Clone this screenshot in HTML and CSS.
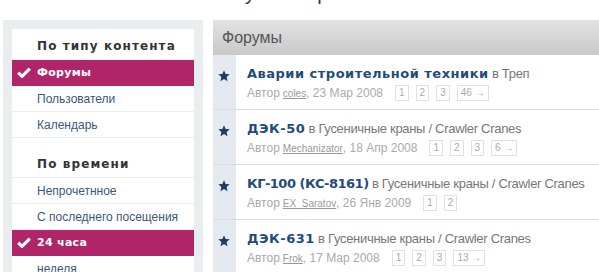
FILE: index.html
```html
<!DOCTYPE html>
<html lang="ru">
<head>
  <meta charset="UTF-8">
  <meta name="viewport" content="width=device-width, initial-scale=1.0">
  <title>Форумы</title>
  <link rel="stylesheet" href="styles.css">
</head>
<body>
  <div class="page-head">
    <h1 class="page-title">Активные темы за сутки и прочее</h1>
  </div>

  <div class="page">
    <div class="sidebar">
      <div class="sidebar-inner">
        <div class="filter-group">
          <div class="filter-title">По типу контента</div>
          <a class="filter-item active" href="#">
            <svg class="check" viewBox="0 0 14 11" width="14" height="11"><path d="M1.2 5.8 L5 9.3 L12.8 1.6" fill="none" stroke="#fff" stroke-width="3.2"/></svg>
            Форумы
          </a>
          <a class="filter-item" href="#">Пользователи</a>
          <a class="filter-item" href="#">Календарь</a>
        </div>

        <div class="filter-group">
          <div class="filter-title">По времени</div>
          <a class="filter-item" href="#">Непрочетнное</a>
          <a class="filter-item" href="#">С последнего посещения</a>
          <a class="filter-item active" href="#">
            <svg class="check" viewBox="0 0 14 11" width="14" height="11"><path d="M1.2 5.8 L5 9.3 L12.8 1.6" fill="none" stroke="#fff" stroke-width="3.2"/></svg>
            24 часа
          </a>
          <a class="filter-item" href="#">неделя</a>
        </div>
      </div>
    </div>

    <div class="main">
      <div class="main-header">Форумы</div>

      <div class="topic">
        <div class="topic-icon"><svg viewBox="0 0 12 12" width="12" height="12"><path d="M6 0.3 L7.6 4 L11.7 4.3 L8.6 7 L9.5 11.2 L6 9 L2.5 11.2 L3.4 7 L0.3 4.3 L4.4 4 Z" fill="#1e3d64"/></svg></div>
        <div class="topic-body">
          <div class="topic-line"><a class="topic-title" href="#">Аварии строительной техники</a> в Треп</div>
          <div class="topic-meta">
            Автор <a class="author" href="#">coles</a>, 23 Мар 2008
            <span class="pager"><a href="#">1</a><a href="#">2</a><a href="#">3</a><a href="#">46 &rarr;</a></span>
          </div>
        </div>
      </div>

      <div class="topic">
        <div class="topic-icon"><svg viewBox="0 0 12 12" width="12" height="12"><path d="M6 0.3 L7.6 4 L11.7 4.3 L8.6 7 L9.5 11.2 L6 9 L2.5 11.2 L3.4 7 L0.3 4.3 L4.4 4 Z" fill="#1e3d64"/></svg></div>
        <div class="topic-body">
          <div class="topic-line"><a class="topic-title" href="#">ДЭК-50</a> в Гусеничные краны / Crawler Cranes</div>
          <div class="topic-meta">
            Автор <a class="author" href="#">Mechanizator</a>, 18 Апр 2008
            <span class="pager"><a href="#">1</a><a href="#">2</a><a href="#">3</a><a href="#">6 &rarr;</a></span>
          </div>
        </div>
      </div>

      <div class="topic">
        <div class="topic-icon"><svg viewBox="0 0 12 12" width="12" height="12"><path d="M6 0.3 L7.6 4 L11.7 4.3 L8.6 7 L9.5 11.2 L6 9 L2.5 11.2 L3.4 7 L0.3 4.3 L4.4 4 Z" fill="#1e3d64"/></svg></div>
        <div class="topic-body">
          <div class="topic-line"><a class="topic-title narrow" href="#">КГ-100 (КС-8161)</a> в Гусеничные краны / Crawler Cranes</div>
          <div class="topic-meta">
            Автор <a class="author" href="#">EX_Saratov</a>, 26 Янв 2009
            <span class="pager"><a href="#">1</a><a href="#">2</a></span>
          </div>
        </div>
      </div>

      <div class="topic">
        <div class="topic-icon"><svg viewBox="0 0 12 12" width="12" height="12"><path d="M6 0.3 L7.6 4 L11.7 4.3 L8.6 7 L9.5 11.2 L6 9 L2.5 11.2 L3.4 7 L0.3 4.3 L4.4 4 Z" fill="#1e3d64"/></svg></div>
        <div class="topic-body">
          <div class="topic-line"><a class="topic-title" href="#">ДЭК-631</a> в Гусеничные краны / Crawler Cranes</div>
          <div class="topic-meta">
            Автор <a class="author" href="#">Frok</a>, 17 Мар 2008
            <span class="pager"><a href="#">1</a><a href="#">2</a><a href="#">3</a><a href="#">13 &rarr;</a></span>
          </div>
        </div>
      </div>
    </div>
  </div>
</body>
</html>
```

FILE: styles.css
```css
body {
  margin: 0;
  font-family: "Liberation Sans", Arial, sans-serif;
  background-color: #fff;
  overflow: hidden;
}

a {
  text-decoration: none;
}

/* only the bottom of the page heading shows above the frame */
.page-head {
  height: 20px;
  overflow: hidden;
}

.page-title {
  margin: -17px 0 0 60px;
  font-size: 20px;
  line-height: 20px;
  font-weight: normal;
  color: #333;
}

.page {
  display: flex;
  align-items: flex-start;
  gap: 10px;
  padding-left: 3px;
}

.sidebar {
  width: 182px;
  flex-shrink: 0;
  padding: 9px 9px 40px;
  background-color: #e8edf0;
}

.sidebar-inner {
  background-color: #fff;
}

.filter-group + .filter-group {
  margin-top: 9px;
}

.filter-title {
  height: 30px;
  padding: 0 0 0 25px;
  line-height: 34px;
  font-family: "DejaVu Sans", Verdana, sans-serif;
  font-size: 12px;
  font-weight: bold;
  letter-spacing: 1.1px;
  color: #333;
  border-bottom: 1px solid #e8edf0;
}

.filter-item {
  display: flex;
  align-items: center;
  height: 25px;
  padding-left: 25px;
  font-size: 12px;
  color: #3b5877;
  border-bottom: 1px solid #e8edf0;
  position: relative;
}

.filter-item.active {
  background-color: #b0256a;
  color: #fff;
  font-family: "DejaVu Sans", Verdana, sans-serif;
  font-size: 11px;
  font-weight: bold;
  letter-spacing: 0.3px;
  border-bottom-color: #b0256a;
}

.check {
  position: absolute;
  left: 5px;
  top: 7px;
}

.main {
  flex: 1;
  min-width: 0;
}

.main-header {
  height: 35px;
  padding-left: 9px;
  line-height: 35px;
  font-size: 16px;
  color: #555;
  background: linear-gradient(#e2e2e2, #c9c9c9);
}

.topic {
  display: flex;
  border-bottom: 1px solid #ddd;
}

.topic-icon {
  width: 23px;
  flex-shrink: 0;
  background-color: #e4eaf0;
  padding-top: 13px;
  padding-left: 5px;
  box-sizing: border-box;
}

.topic-body {
  padding: 10px 0 7px 11px;
  white-space: nowrap;
}

.topic-line {
  height: 18px;
  line-height: 18px;
  font-size: 13px;
  letter-spacing: -0.3px;
  color: #777;
}

.topic-title {
  font-family: "DejaVu Sans", Verdana, sans-serif;
  font-weight: bold;
  font-size: 13px;
  letter-spacing: 0.5px;
  color: #1f4c7c;
}

.topic-title.narrow {
  letter-spacing: -0.5px;
}

.topic-meta {
  display: flex;
  align-items: center;
  height: 18px;
  margin-top: 1px;
  font-size: 12px;
  color: #aaa;
}

.author {
  margin-left: 3px;
  font-size: 10px;
  color: #999;
  text-decoration: underline;
}

.pager {
  display: flex;
  gap: 7px;
  margin-left: 12px;
}

.pager a {
  display: block;
  height: 14px;
  padding: 0 3px;
  line-height: 14px;
  font-size: 10px;
  color: #aaa;
  border: 1px solid #dde2e6;
}
```
